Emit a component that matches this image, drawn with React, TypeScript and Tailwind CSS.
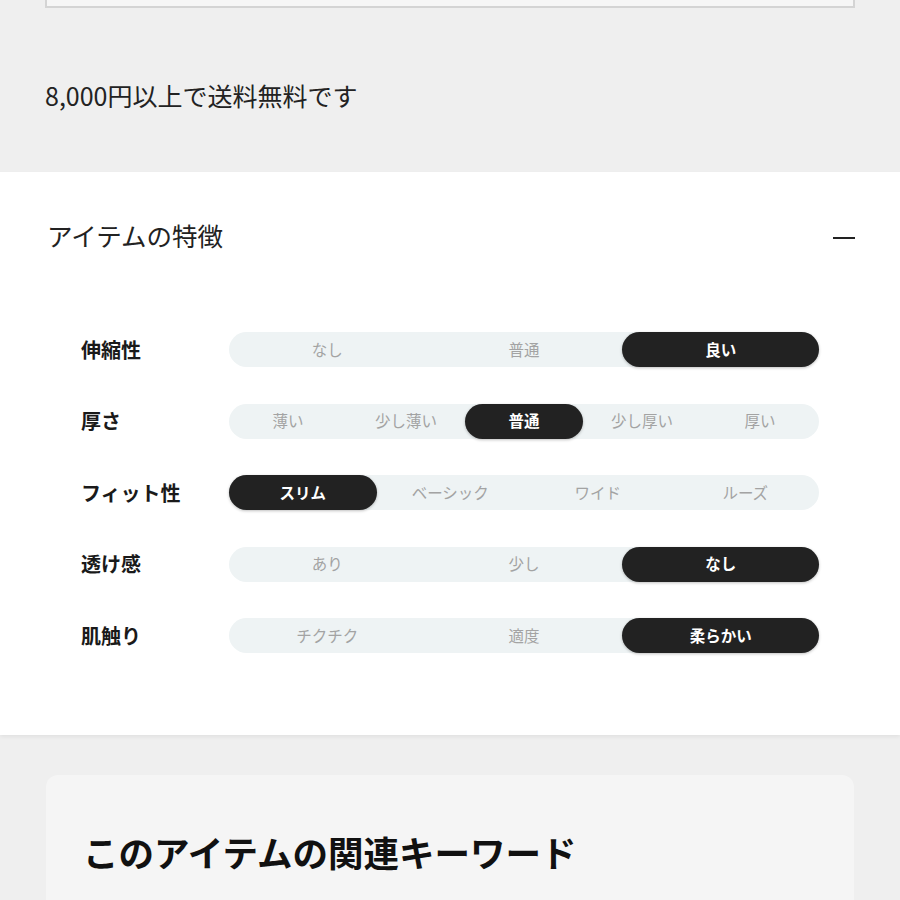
const jp = "font-['Noto_Sans_CJK_JP',sans-serif]";

type Feature = { label: string; options: string[]; selected: number };

const features: Feature[] = [
  { label: "伸縮性", options: ["なし", "普通", "良い"], selected: 2 },
  { label: "厚さ", options: ["薄い", "少し薄い", "普通", "少し厚い", "厚い"], selected: 2 },
  { label: "フィット性", options: ["スリム", "ベーシック", "ワイド", "ルーズ"], selected: 0 },
  { label: "透け感", options: ["あり", "少し", "なし"], selected: 2 },
  { label: "肌触り", options: ["チクチク", "適度", "柔らかい"], selected: 2 },
];

function FeatureRow({ f }: { f: Feature }) {
  return (
    <div className="flex items-center">
      <div className="w-[148px] text-[20px] font-bold text-[#1a1a1a] leading-none">{f.label}</div>
      <div className="flex h-[35px] w-[590px] rounded-full bg-[#eef3f4]">
        {f.options.map((o, i) => (
          <div
            key={o + i}
            className={
              i === f.selected
                ? "flex flex-1 items-center justify-center rounded-full bg-[#222] text-[15.5px] font-bold text-white shadow-[0_1px_3px_rgba(0,0,0,0.25)]"
                : "flex flex-1 items-center justify-center text-[15.5px] text-[#a3a3a3]"
            }
          >
            {o}
          </div>
        ))}
      </div>
    </div>
  );
}

export default function App() {
  return (
    <div className={`min-h-screen overflow-hidden bg-[#efefef] ${jp}`}>
      <div className="mx-[45px] h-[8px] border-2 border-t-0 border-[#d4d4d4] bg-[#f6f6f6]" />

      <div className="px-[45px] pt-[71px] pb-[61px]">
        <p className="text-[25px] leading-[32px] text-[#222]">8,000円以上で送料無料です</p>
      </div>

      <section className="bg-white shadow-[0_2px_4px_rgba(0,0,0,0.06)]">
        <div className="flex items-center justify-between pl-[47px] pr-[45px] pt-[48px]">
          <h2 className="font-['Liberation_Serif','Noto_Sans_CJK_JP',serif] text-[25.5px] leading-[36px] text-[#222]">
            アイテムの特徴
          </h2>
          <div className="h-[2.5px] w-[22px] bg-[#222]" />
        </div>

        <div className="flex flex-col gap-[36.5px] pl-[81px] pt-[76px] pb-[82px]">
          {features.map((f) => (
            <FeatureRow key={f.label} f={f} />
          ))}
        </div>
      </section>

      <div className="px-[46px] pt-[40px]">
        <div className="rounded-xl bg-[#f5f5f5] px-[37px] pt-[54px] pb-[60px]">
          <h2 className="text-[35.5px] font-bold leading-[46px] text-[#111]">このアイテムの関連キーワード</h2>
        </div>
      </div>
    </div>
  );
}
